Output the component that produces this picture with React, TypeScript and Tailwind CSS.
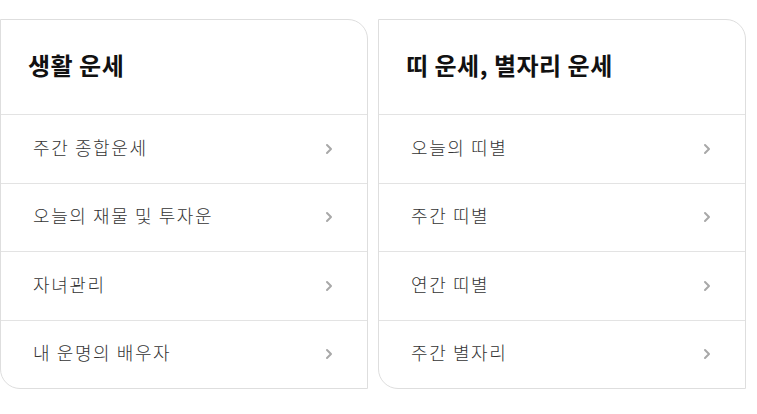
import { ChevronRight } from "lucide-react"

const sections = [
  {
    title: "생활 운세",
    items: ["주간 종합운세", "오늘의 재물 및 투자운", "자녀관리", "내 운명의 배우자"],
  },
  {
    title: "띠 운세, 별자리 운세",
    items: ["오늘의 띠별", "주간 띠별", "연간 띠별", "주간 별자리"],
  },
]

export default function App() {
  return (
    <div
      className="w-[757px] h-[414px] bg-white pt-[19px] flex gap-[10px]"
      style={{ fontFamily: '"Noto Sans CJK KR", "Noto Sans", sans-serif' }}
    >
      {sections.map((s) => (
        <FortuneCard key={s.title} title={s.title} items={s.items} />
      ))}
    </div>
  )
}

function FortuneCard({ title, items }: { title: string; items: string[] }) {
  return (
    <div className="w-[368px] h-[370px] border border-[#dedede] rounded-tr-[20px] rounded-bl-[20px] bg-white flex flex-col overflow-hidden">
      {/* Header */}
      <div className="h-[95px] flex items-center px-[27px] pb-[4px] border-b border-[#e3e3e3]">
        <h3 className="text-[24px] font-bold text-[#111] tracking-[0.5px]">{title}</h3>
      </div>
      <ul className="flex-1 flex flex-col">
        {items.map((item, i) => (
          <li
            key={item}
            className={`flex-1 flex items-center justify-between pl-[32px] pr-[30px] ${
              i < items.length - 1 ? "border-b border-[#e3e3e3]" : ""
            }`}
          >
            <span className="text-[18px] font-light text-[#333] tracking-[1.6px] pb-[3px]">{item}</span>
            <ChevronRight className="w-[16px] h-[16px] text-[#a8a8a8]" strokeWidth={3} />
          </li>
        ))}
      </ul>
    </div>
  )
}
